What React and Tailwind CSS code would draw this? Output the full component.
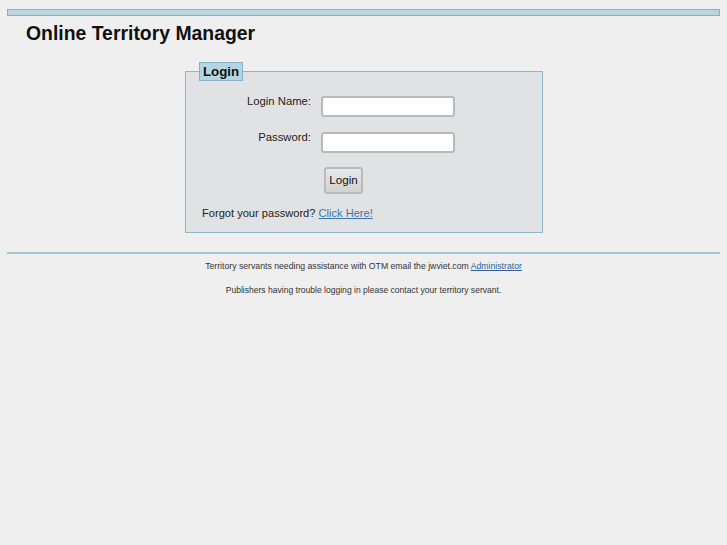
const App = () => {
  return (
    <div className="min-h-[545px] bg-[#efefef] px-[7px] pt-[9px] font-['Liberation_Sans',Arial,sans-serif] text-[#222]">
      <div className="h-[7px] border border-[#86b1c6] bg-[#b9d6e0]" />
      <h1 className="mt-[6px] ml-[19px] text-[19.4px] leading-[23px] font-bold text-[#111]">Online Territory Manager</h1>

      <fieldset className="mt-[17px] ml-[178px] h-[171px] w-[358px] border border-[#8db6ca] bg-[#e1e2e4] pl-[16px]">
        <legend className="ml-[-3px] h-[19px] w-[44px] border border-[#86b1c6] bg-[#b5d5e3] px-[3px] text-[13.3px] leading-[17px] font-bold text-[#111]">
          Login
        </legend>

        <form className="flex flex-col">
          <div className="mt-[15px] flex">
            <label className="w-[109px] text-right text-[11.3px] leading-[10px]">Login Name:</label>
            <input type="text" className="ml-[10px] h-[21px] w-[134px] rounded-[3px] border-2 border-[#bababa] bg-white" />
          </div>
          <div className="mt-[15px] flex">
            <label className="w-[109px] text-right text-[11.3px] leading-[10px]">Password:</label>
            <input type="password" className="ml-[10px] h-[21px] w-[134px] rounded-[3px] border-2 border-[#bababa] bg-white" />
          </div>
          <button type="button" className="mt-[14px] ml-[122px] h-[27px] w-[39px] rounded-[3px] border-2 border-[#bababa] bg-gradient-to-b from-[#e8e8e8] to-[#d2d2d2] pb-[2px] text-[11.6px] text-[#111]">
            Login
          </button>
          <p className="mt-[12px] text-[11.1px] leading-[14px]">
            Forgot your password? <a href="#" className="text-[#3c77ac] underline">Click Here!</a>
          </p>
        </form>
      </fieldset>

      <div className="mt-[19px] border-t-2 border-[#a5c8d8] pt-[7px] text-center leading-[11px] text-[#333]">
        <p className="text-[8.7px]">
          Territory servants needing assistance with OTM email the jwviet.com <a href="#" className="text-[#2f5f96] underline">Administrator</a>
        </p>
        <p className="mt-[13px] text-[8.55px]">Publishers having trouble logging in please contact your territory servant.</p>
      </div>
    </div>
  )
}

export default App
